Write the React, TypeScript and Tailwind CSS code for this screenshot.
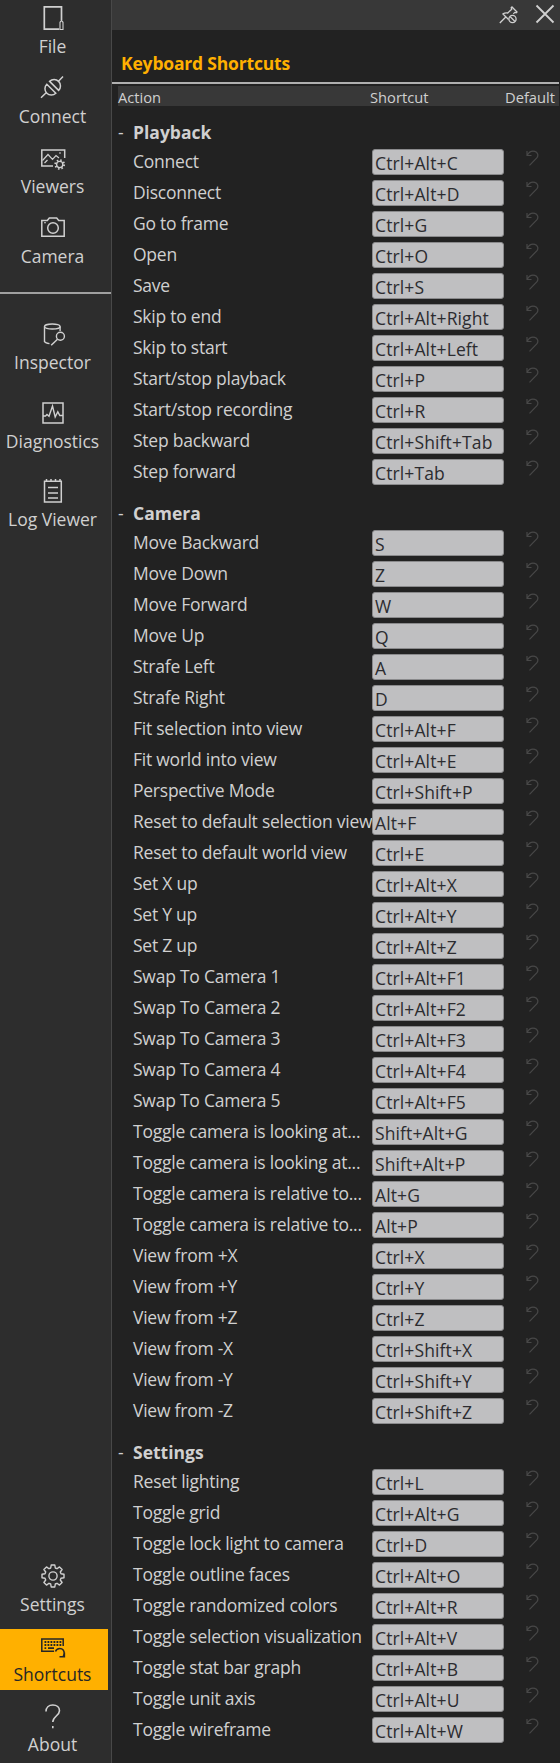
import type { ReactNode } from "react";

type Shortcut = [action: string, keys: string];

const groups: { name: string; items: Shortcut[] }[] = [
  {
    name: "Playback",
    items: [
      ["Connect", "Ctrl+Alt+C"],
      ["Disconnect", "Ctrl+Alt+D"],
      ["Go to frame", "Ctrl+G"],
      ["Open", "Ctrl+O"],
      ["Save", "Ctrl+S"],
      ["Skip to end", "Ctrl+Alt+Right"],
      ["Skip to start", "Ctrl+Alt+Left"],
      ["Start/stop playback", "Ctrl+P"],
      ["Start/stop recording", "Ctrl+R"],
      ["Step backward", "Ctrl+Shift+Tab"],
      ["Step forward", "Ctrl+Tab"],
    ],
  },
  {
    name: "Camera",
    items: [
      ["Move Backward", "S"],
      ["Move Down", "Z"],
      ["Move Forward", "W"],
      ["Move Up", "Q"],
      ["Strafe Left", "A"],
      ["Strafe Right", "D"],
      ["Fit selection into view", "Ctrl+Alt+F"],
      ["Fit world into view", "Ctrl+Alt+E"],
      ["Perspective Mode", "Ctrl+Shift+P"],
      ["Reset to default selection view", "Alt+F"],
      ["Reset to default world view", "Ctrl+E"],
      ["Set X up", "Ctrl+Alt+X"],
      ["Set Y up", "Ctrl+Alt+Y"],
      ["Set Z up", "Ctrl+Alt+Z"],
      ["Swap To Camera 1", "Ctrl+Alt+F1"],
      ["Swap To Camera 2", "Ctrl+Alt+F2"],
      ["Swap To Camera 3", "Ctrl+Alt+F3"],
      ["Swap To Camera 4", "Ctrl+Alt+F4"],
      ["Swap To Camera 5", "Ctrl+Alt+F5"],
      ["Toggle camera is looking at...", "Shift+Alt+G"],
      ["Toggle camera is looking at...", "Shift+Alt+P"],
      ["Toggle camera is relative to...", "Alt+G"],
      ["Toggle camera is relative to...", "Alt+P"],
      ["View from +X", "Ctrl+X"],
      ["View from +Y", "Ctrl+Y"],
      ["View from +Z", "Ctrl+Z"],
      ["View from -X", "Ctrl+Shift+X"],
      ["View from -Y", "Ctrl+Shift+Y"],
      ["View from -Z", "Ctrl+Shift+Z"],
    ],
  },
  {
    name: "Settings",
    items: [
      ["Reset lighting", "Ctrl+L"],
      ["Toggle grid", "Ctrl+Alt+G"],
      ["Toggle lock light to camera", "Ctrl+D"],
      ["Toggle outline faces", "Ctrl+Alt+O"],
      ["Toggle randomized colors", "Ctrl+Alt+R"],
      ["Toggle selection visualization", "Ctrl+Alt+V"],
      ["Toggle stat bar graph", "Ctrl+Alt+B"],
      ["Toggle unit axis", "Ctrl+Alt+U"],
      ["Toggle wireframe", "Ctrl+Alt+W"],
    ],
  },
];

function Icon({ children }: { children: ReactNode }) {
  return (
    <svg
      className="h-[29px] w-[26px] shrink-0"
      viewBox="0 0 26 29"
      fill="none"
      stroke="currentColor"
      strokeWidth="1.5"
    >
      {children}
    </svg>
  );
}

const gearTeeth =
  "M11.2 2h3.6l.5 3 1.7.7 2.5-1.8 2.6 2.6-1.8 2.5.7 1.7 3 .5v3.6l-3 .5-.7 1.7 1.8 2.5-2.6 2.6-2.5-1.8-1.7.7-.5 3h-3.6l-.5-3-1.7-.7-2.5 1.8-2.6-2.6 1.8-2.5-.7-1.7-3-.5v-3.6l3-.5.7-1.7-1.8-2.5 2.6-2.6 2.5 1.8 1.7-.7z";

const icons: Record<string, ReactNode> = {
  File: (
    <Icon>
      <path d="M21.5 15V1.8H4.3v22.4h15" strokeWidth="1.7" />
      <path d="M20 24.5v-7.2l1.5-2 1.5 2v7.2z" strokeWidth="1.1" />
    </Icon>
  ),
  Connect: (
    <Icon>
      <path d="M1 22.8l5.7-5.5M18.5 6.3L23 1.5" />
      <path d="M6.8 9.2l9 9a6.36 6.36 0 0 1-9-9zM9.6 6.4l9 9a6.36 6.36 0 0 0-9-9z" />
    </Icon>
  ),
  Viewers: (
    <Icon>
      <path d="M13 21H1.8V5h22.9v8" />
      <path d="M2.5 15.5L8 9.5l4.5 4.8L16 10.5l3 2.5M4.5 18l3-3M19 8h2" strokeWidth="1.2" />
      <circle cx="19.7" cy="19.5" r="3.1" strokeWidth="1.3" />
      <circle cx="19.7" cy="19.5" r="4.4" strokeWidth="1.9" strokeDasharray="1.5 1.956" />
    </Icon>
  ),
  Camera: (
    <Icon>
      <path d="M1.8 21.2V5.5h5.5l2-2.5h7.4l2 2.5h5.5v15.7z" />
      <circle cx="13" cy="13" r="5.3" />
      <path d="M4 7.7h2" strokeWidth="1.1" />
    </Icon>
  ),
  Inspector: (
    <Icon>
      <ellipse cx="12.3" cy="5.5" rx="7.8" ry="2.5" strokeWidth="1.4" />
      <path d="M4.5 5.5v15.2c.8 1.2 2.5 1.7 5 1.9M20.1 5.5V10" strokeWidth="1.4" />
      <circle cx="20.4" cy="15.3" r="4" strokeWidth="1.4" />
      <path d="M17.5 18.3l-6.3 6" />
    </Icon>
  ),
  Diagnostics: (
    <Icon>
      <path d="M3 3h20v20H3z" />
      <path d="M3 16h2.5l1.5-1.5 2 1.7L12.5 6l2.7 11 2.6-5.2 2 3.7H23" strokeWidth="1.4" />
    </Icon>
  ),
  "Log Viewer": (
    <Icon>
      <path d="M4.5 3.2h16.8v20.7H4.5zM8 9.5h10M8 15h10M8 20h10M6.5 1v2M11 1v2M15.5 1v2M20 1v2" />
    </Icon>
  ),
  Settings: (
    <Icon>
      <path d={gearTeeth} strokeWidth="1.4" strokeLinejoin="round" />
      <circle cx="13" cy="13" r="4.1" strokeWidth="1.4" />
    </Icon>
  ),
  Shortcuts: (
    <Icon>
      <path d="M14 18.2H1.8V6h21.4v7" />
      <path d="M4.5 9h17M4.5 12h17" strokeWidth="1.8" strokeDasharray="1.8 1.2" />
      <path d="M4.5 15.2h1.7M8 15.2h6" strokeWidth="1.8" />
      <path d="M15.5 18.5c.6-2 2.3-3.1 4.3-3.1 3 0 4.700 2.400 4.300 5.200-.1 1.200-.5 2.200-.9 3M19.500 23.800h4.900v-4.300" />
    </Icon>
  ),
  About: (
    <Icon>
      <path d="M6 8.500C6 4.500 8.700 2 12.800 2s6.700 2.300 6.700 5.700c0 5-6.700 5.700-6.700 11.300M12.800 23v2.300" strokeWidth="1.600" />
    </Icon>
  ),
};

function NavItem({ name, active = false }: { name: string; active?: boolean }) {
  return (
    <button
      className={
        active
          ? "flex h-[61px] w-[108px] shrink-0 flex-col items-center bg-[#ffb000] pt-1 pr-0.5 text-[#262626]"
          : "flex h-[61px] w-[108px] shrink-0 flex-col items-center pt-1 pr-0.5 text-[#d0d0d0]"
      }
    >
      {icons[name]}
      <span className="mr-px whitespace-nowrap text-[17.5px] leading-6">{name}</span>
    </button>
  );
}

function ShortcutRow({ action, keys }: { action: string; keys: string }) {
  return (
    <div className="flex h-[31px] pl-[21px]">
      <span className="w-[239px] shrink-0 whitespace-nowrap text-[17.5px] leading-[31px] tracking-[-0.24px]">
        {action}
      </span>
      <div className="mt-[3px] h-[26px] w-[132px] shrink-0 rounded-[3px] border border-[#8a8a8c] bg-[#bfbfc1] pl-[2px] text-[17.5px] leading-[26px] tracking-[0.12px] whitespace-nowrap text-[#2c2c30]">
        {keys}
      </div>
      <svg
        className="mt-1 ml-[22px] h-4 w-[13px]"
        viewBox="0 0 13 16"
        fill="none"
        stroke="#484848"
        strokeWidth="1.2"
      >
        <path d="M1 1v4.5h4.5M1.3 5.2C3 2 6 .7 8.7 1.4c3 .8 4 4 2.3 6.3L3.5 15.3" />
      </svg>
    </div>
  );
}

export default function App() {
  return (
    <div className="flex h-[1763px] w-[560px] overflow-hidden bg-[#222222] font-['Open_Sans','Noto_Sans',sans-serif] text-[#d0d0d0]">
      <nav className="flex w-28 shrink-0 flex-col border-r border-[#484848] bg-[#2d2d2d] pt-px pb-[3px]">
        <div className="flex flex-col gap-[9px]">
          <NavItem name="File" />
          <NavItem name="Connect" />
          <NavItem name="Viewers" />
          <NavItem name="Camera" />
        </div>
        <div className="mt-5 h-0.5 shrink-0 bg-[#a0a0a0]" />
        <div className="mt-[23px] flex flex-col gap-[17.5px]">
          <NavItem name="Inspector" />
          <NavItem name="Diagnostics" />
          <NavItem name="Log Viewer" />
        </div>
        <div className="mt-auto flex flex-col gap-[9px]">
          <NavItem name="Settings" />
          <NavItem name="Shortcuts" active />
          <NavItem name="About" />
        </div>
      </nav>
      <main className="flex min-w-0 flex-1 flex-col">
        <div className="flex h-[30px] shrink-0 items-start justify-end bg-[#383838]">
          <svg className="mt-1.5 h-[18px] w-[19px]" viewBox="0 0 19 18" fill="none" stroke="currentColor" strokeWidth="1.3">
            <path d="M.8 17l6-6M3.5 7.5l6 6M4 7.9c1.5-1 3-1.2 4.7-.9l4-3.7-.5-1.5.8-.8 5 5-.8.8-1.4-.4-1.5 1.5" />
            <circle cx="13.5" cy="13" r="3.6" />
            <path d="M11 10.5l5 5" />
          </svg>
          <svg className="mt-1 mr-[5px] ml-[17px] h-5 w-5" viewBox="0 0 20 20" fill="none" stroke="currentColor" strokeWidth="1.8">
            <path d="M1.5 1.5l17 17M18.5 1.5l-17 17" />
          </svg>
        </div>
        <h1 className="h-[52px] shrink-0 pt-[18px] pl-[9px] text-[17.5px] leading-[30px] font-bold tracking-[-0.18px] text-[#ffb000]">
          Keyboard Shortcuts
        </h1>
        <div className="mr-px h-0.5 shrink-0 bg-[#b0b0b0]" />
        <div className="mt-[2px] mr-px ml-1.5 flex h-5 shrink-0 bg-[#383838] text-[14.7px] leading-[22px]">
          <span className="w-[252px]">Action</span>
          <span className="w-[135px]">Shortcut</span>
          <span>Default</span>
        </div>
        <div className="flex flex-col">
          {groups.map((group) => (
            <section key={group.name}>
              <h2 className="flex h-10 pt-[11px] pl-[6px] text-[17.5px] leading-[31px]">
                <span className="w-[15px]">-</span>
                <span className="font-bold">{group.name}</span>
              </h2>
              {group.items.map(([action, keys], i) => (
                <ShortcutRow key={i} action={action} keys={keys} />
              ))}
            </section>
          ))}
        </div>
      </main>
    </div>
  );
}
